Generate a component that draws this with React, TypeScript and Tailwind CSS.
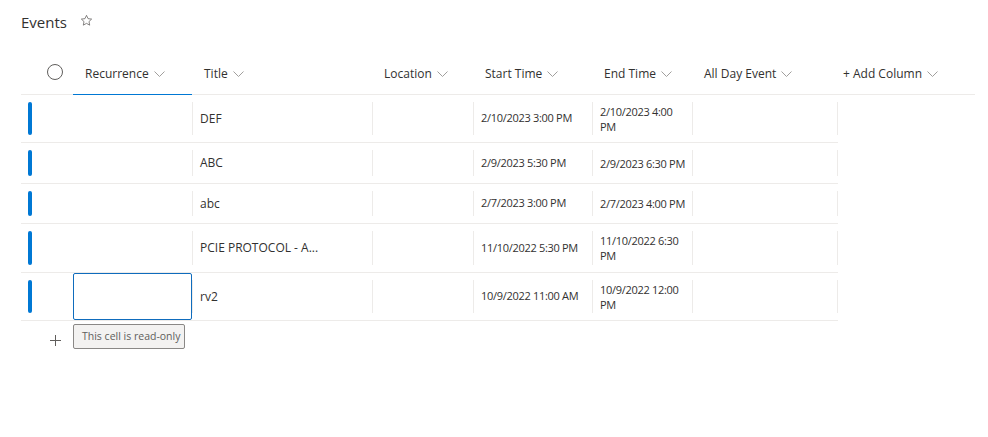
import React from "react";
import clsx from "clsx";

type EventRow = {
  title: string;
  start: string;
  end: string[];
  height: string;
  focused?: boolean;
};

const ROWS: EventRow[] = [
  { title: "DEF", start: "2/10/2023 3:00 PM", end: ["2/10/2023 4:00", "PM"], height: "h-[48px]" },
  { title: "ABC", start: "2/9/2023 5:30 PM", end: ["2/9/2023 6:30 PM"], height: "h-[41px]" },
  { title: "abc", start: "2/7/2023 3:00 PM", end: ["2/7/2023 4:00 PM"], height: "h-[40px]" },
  { title: "PCIE PROTOCOL - A...", start: "11/10/2022 5:30 PM", end: ["11/10/2022 6:30", "PM"], height: "h-[49px]" },
  { title: "rv2", start: "10/9/2022 11:00 AM", end: ["10/9/2022 12:00", "PM"], height: "h-[48px]", focused: true },
];

const Chevron = () => (
  <svg width="11" height="6" viewBox="0 0 11 6" className="ml-[5px] flex-none">
    <path d="M0.5 0.5 L5.5 5.5 L10.5 0.5" fill="none" stroke="#a19f9d" strokeWidth="1" />
  </svg>
);

const Star = () => (
  <svg width="13" height="13" viewBox="0 0 24 24" className="ml-[13px] -mt-[3px]">
    <path
      d="M12 2.5l2.9 6.1 6.6.8-4.9 4.6 1.3 6.6L12 17.3l-5.9 3.3 1.3-6.6-4.9-4.6 6.6-.8z"
      fill="none"
      stroke="#605e5c"
      strokeWidth="1.4"
      strokeLinejoin="round"
    />
  </svg>
);

const HeaderCell: React.FC<{ w: string; label: string; pl?: string; active?: boolean }> = ({
  w,
  label,
  pl = "pl-[12px]",
  active,
}) => (
  <div
    className={clsx(
      w,
      pl,
      "flex-none flex items-center",
      active && "border-b border-[#0078d4] -mb-px"
    )}
  >
    <span className="whitespace-nowrap">{label}</span>
    <Chevron />
  </div>
);

const Cell: React.FC<{ w: string; last?: boolean; children?: React.ReactNode }> = ({
  w,
  last,
  children,
}) => (
  <div className={clsx(w, "flex-none py-[7px]")}>
    <div
      className={clsx(
        "h-full flex flex-col justify-center pl-[7px] border-l border-[#edebe9]",
        last && "border-r"
      )}
    >
      {children}
    </div>
  </div>
);

export default function App() {
  return (
    <div className="w-[988px] h-[437px] bg-white text-[#323130] font-['Open_Sans','Noto_Sans',sans-serif] overflow-hidden">
      {/* list title */}
      <div className="pl-[21px] pt-[12px] h-[32px] flex items-center">
        <span className="text-[15px] leading-[20px]">Events</span>
        <Star />
      </div>

      <div className="ml-[21px] mt-[21px] w-[954px]">
        {/* column headers */}
        <div className="flex items-stretch h-[42px] border-b border-[#edebe9] text-[12px]">
          <div className="w-[52px] flex-none flex items-center pl-[26px] -mt-[3px]">
            <div className="w-[16px] h-[16px] rounded-full border border-[#605e5c]" />
          </div>
          <HeaderCell w="w-[119px]" label="Recurrence" active />
          <HeaderCell w="w-[180px]" label="Title" />
          <HeaderCell w="w-[101px]" label="Location" />
          <HeaderCell w="w-[119px]" label="Start Time" />
          <HeaderCell w="w-[100px]" label="End Time" />
          <HeaderCell w="w-[146px]" label="All Day Event" />
          <HeaderCell w="w-[137px]" label="+ Add Column" pl="pl-[5px]" />
        </div>

        {/* rows */}
        {ROWS.map((row) => (
          <div key={row.title} className={clsx(row.height, "w-[817px] flex items-stretch border-b border-[#edebe9]")}>
            <div className="w-[52px] flex-none py-[7px] pl-[7px]">
              <div className="w-[4px] h-full rounded-full bg-[#0078d4]" />
            </div>
            <div
              className={clsx(
                "w-[119px] flex-none",
                row.focused && "border border-[#0f6cbd] rounded-[2px]"
              )}
            />
            <Cell w="w-[180px]">
              <span className="text-[12px] whitespace-nowrap">{row.title}</span>
            </Cell>
            <Cell w="w-[101px]" />
            <Cell w="w-[119px]">
              <span className="text-[11px] tracking-[-0.3px] whitespace-nowrap">{row.start}</span>
            </Cell>
            <Cell w="w-[100px]">
              {row.end.map((line) => (
                <span key={line} className="text-[11px] leading-[15px] tracking-[-0.3px] whitespace-nowrap">
                  {line}
                </span>
              ))}
            </Cell>
            <Cell w="w-[146px]" last />
          </div>
        ))}

        {/* new item row + read-only hint */}
        <div className="flex items-start">
          <div className="w-[52px] flex-none pl-[29px] pt-[14px]">
            <svg width="11" height="11" viewBox="0 0 11 11">
              <path d="M5.5 0 V11 M0 5.5 H11" stroke="#605e5c" strokeWidth="1" />
            </svg>
          </div>
          <div className="mt-[3px] h-[25px] w-[112px] flex items-center px-[8px] bg-[#f3f2f1] border border-[#8a8886] rounded-[2px] text-[10.5px] text-[#605e5c] whitespace-nowrap">
            This cell is read-only
          </div>
        </div>
      </div>
    </div>
  );
}
